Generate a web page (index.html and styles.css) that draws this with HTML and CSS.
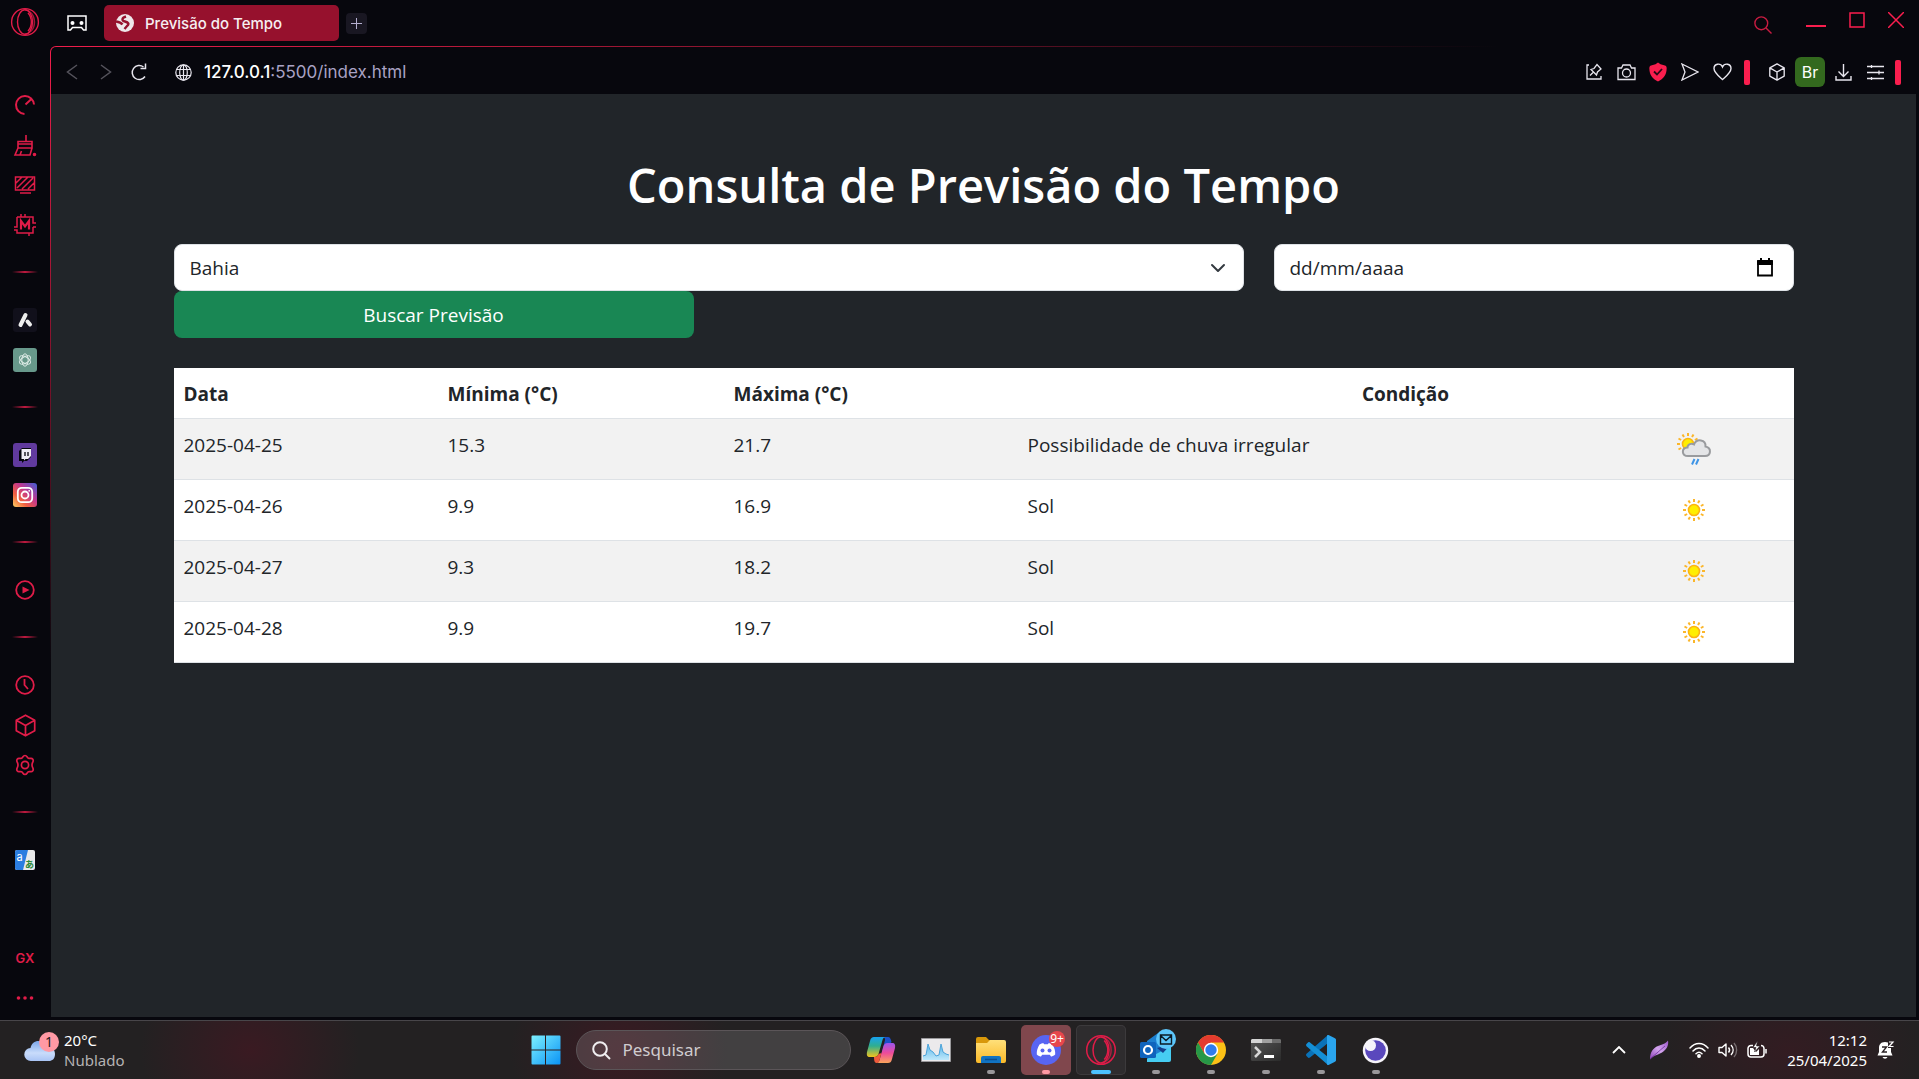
FILE: index.html
```html
<!DOCTYPE html>
<html lang="pt-BR">
<head>
<meta charset="utf-8">
<meta name="viewport" content="width=device-width, initial-scale=1">
<title>Previsão do Tempo</title>
<link rel="stylesheet" href="styles.css">
</head>
<body>
<svg class="defs" aria-hidden="true">
  <defs>
    <linearGradient id="gWin" x1="0" y1="0" x2="1" y2="1"><stop offset="0" stop-color="#7df0ff"/><stop offset="1" stop-color="#0a93f5"/></linearGradient>
    <linearGradient id="gInsta" x1="0" y1="1" x2="1" y2="0"><stop offset="0" stop-color="#fdd365"/><stop offset=".3" stop-color="#f2603f"/><stop offset=".6" stop-color="#c2378f"/><stop offset="1" stop-color="#3c5fd8"/></linearGradient>
    <linearGradient id="gCloud" x1="0" y1="0" x2="0" y2="1"><stop offset="0" stop-color="#7aa6ea"/><stop offset=".6" stop-color="#c9dcfb"/><stop offset="1" stop-color="#a9c4f5"/></linearGradient>
    <linearGradient id="gCopA" x1="0" y1="0" x2="0" y2="1"><stop offset="0" stop-color="#17a2f0"/><stop offset=".45" stop-color="#2fae8f"/><stop offset="1" stop-color="#f2c41c"/></linearGradient>
    <linearGradient id="gCopB" x1="0" y1="0" x2="0" y2="1"><stop offset="0" stop-color="#9a55ee"/><stop offset=".5" stop-color="#ee4b9a"/><stop offset="1" stop-color="#fba55a"/></linearGradient>
    <linearGradient id="gFolder" x1="0" y1="0" x2="0" y2="1"><stop offset="0" stop-color="#ffe07a"/><stop offset="1" stop-color="#fbb928"/></linearGradient>
    <linearGradient id="gTerm" x1="0" y1="0" x2="1" y2="1"><stop offset="0" stop-color="#565656"/><stop offset="1" stop-color="#2b2b2b"/></linearGradient>
    <linearGradient id="gFeather" x1="0" y1="1" x2="1" y2="0"><stop offset="0" stop-color="#8a3fb5"/><stop offset=".5" stop-color="#d3a5ee"/><stop offset="1" stop-color="#9a55c8"/></linearGradient>
    <linearGradient id="gGraph" x1="0" y1="0" x2="0" y2="1"><stop offset="0" stop-color="#5fb8ea"/><stop offset="1" stop-color="#bfe8fb"/></linearGradient>
    <symbol id="sun" viewBox="0 0 40 40">
      <g stroke="#fbb62a" stroke-width="2"><path d="M20 9v3M20 28v3M9 20h3M28 20h3M14.500 10.500l1.500 2.600M25.500 10.500L24 13.100M14.500 29.500l1.500-2.600M25.500 29.500L24 26.900M10.500 14.500l2.600 1.500M10.500 25.500l2.600-1.500M29.500 14.500L26.900 16M29.500 25.500L26.900 24"/></g>
      <circle cx="20" cy="20" r="5.500" fill="#ffee00" stroke="#fbb414" stroke-width="1.600"/>
    </symbol>
    <symbol id="opera" viewBox="0 0 30 30">
      <g fill="none" stroke="currentColor" stroke-width="1.400"><circle cx="15" cy="15" r="13.400"/><ellipse cx="15" cy="15" rx="7.500" ry="12.200"/><path d="M15 2.800c5 .5 9.500 5 9.500 12.200S20 26.700 15 27.200" opacity=".7"/><path d="M18 6c4.500 5 4.500 13 0 18"/></g>
    </symbol>
    <symbol id="cube" viewBox="0 0 20 20"><path d="M10 1l8 4.500v9L10 19l-8-4.500v-9zM2 5.500l8 4.500 8-4.500M10 10v9" fill="none" stroke="currentColor" stroke-width="1.500" stroke-linejoin="round"/></symbol>
  </defs>
</svg>

<div class="browser">
  <aside class="sidebar">
    <a class="side-logo" href="#" aria-label="Opera"><svg width="30" height="30"><use href="#opera"/></svg></a>
    <nav class="side-list" aria-label="Barra lateral">
      <a href="#" aria-label="GX Control"><svg width="22" height="22" viewBox="0 0 22 22" fill="none" stroke="currentColor" stroke-width="2"><path d="M10.500 20A9 9 0 1 1 20 10.500M11.500 10.500L18 4.500"/></svg></a>
      <a href="#" aria-label="GX Cleaner"><svg width="24" height="24" viewBox="0 0 24 24" fill="none" stroke="currentColor" stroke-width="1.600"><path d="M13 2v6M5 15V8.500h14V15zM5 11h14M5 15l-3 7h15l2-7M7 22l1.500-4"/><circle cx="21.500" cy="21.500" r="1" fill="currentColor"/></svg></a>
      <a href="#" aria-label="Vídeo"><svg width="22" height="20" viewBox="0 0 22 20" fill="none" stroke="currentColor" stroke-width="1.500"><path d="M1.500 2h19v13h-19zM6 18h11M2 8l6-6M3 13L14 2M8 14L19 3M14 14l6-6"/></svg></a>
      <a href="#" aria-label="Mods"><svg width="24" height="24" viewBox="0 0 24 24" fill="none" stroke="currentColor" stroke-width="1.500"><path d="M4 4h16v6h3M4 4v10H1M20 14v6H4v-3H1M20 14h3M8 4V1M12 4V1M16 20v3"/><path d="M8 16.500V8l4 5.500L16 8v8.500" stroke-width="2.200"/></svg></a>
      <hr>
      <a href="#" aria-label="Aria"><svg width="24" height="24" viewBox="0 0 24 24"><rect width="24" height="24" rx="3" fill="#11101b"/><path d="M7.500 17l5-10" stroke="#eee" stroke-width="4" stroke-linecap="round"/><path d="M14.500 13.500l2.500 3" stroke="#eee" stroke-width="4" stroke-linecap="round"/></svg></a>
      <a href="#" aria-label="ChatGPT"><svg width="24" height="24" viewBox="0 0 24 24"><rect width="24" height="24" rx="3" fill="#68998b"/><g fill="none" stroke="#dcebe6" stroke-width="1"><ellipse cx="12" cy="12" rx="3.200" ry="6.200"/><ellipse cx="12" cy="12" rx="3.200" ry="6.200" transform="rotate(60 12 12)"/><ellipse cx="12" cy="12" rx="3.200" ry="6.200" transform="rotate(120 12 12)"/></g></svg></a>
      <hr>
      <a href="#" aria-label="Twitch"><svg width="24" height="24" viewBox="0 0 24 24"><rect width="24" height="24" rx="3" fill="#613a9e"/><path d="M6 8l3-3h9v9l-4 4h-3l-2 2v-2H6z" fill="#07070d"/><path d="M8.500 6H18v7l-3 3h-2.500L11 17.500V16H8.500z" fill="#f0eef4"/><path d="M12 9v4M15 9v4" stroke="#07070d" stroke-width="1.300"/></svg></a>
      <a href="#" aria-label="Instagram"><svg width="24" height="24" viewBox="0 0 24 24"><rect width="24" height="24" rx="3" fill="url(#gInsta)"/><g fill="none" stroke="#fff" stroke-width="1.800"><rect x="4.800" y="4.800" width="14.400" height="14.400" rx="4"/><circle cx="12" cy="12" r="3.500"/></g><circle cx="16.200" cy="7.800" r=".9" fill="#fff"/></svg></a>
      <hr>
      <a href="#" aria-label="Player"><svg width="20" height="20" viewBox="0 0 20 20"><circle cx="10" cy="10" r="8.800" fill="none" stroke="currentColor" stroke-width="1.800"/><path d="M7.500 6.500v7l7-3.500z" fill="currentColor"/></svg></a>
      <hr>
      <a href="#" aria-label="Histórico"><svg width="20" height="20" viewBox="0 0 20 20" fill="none" stroke="currentColor" stroke-width="1.800"><circle cx="10" cy="10" r="8.800"/><path d="M9.500 4v6l3.500 4"/></svg></a>
      <a href="#" aria-label="Extensões"><svg width="23" height="23"><use href="#cube"/></svg></a>
      <a href="#" aria-label="Configurações"><svg width="22" height="22" viewBox="0 0 22 22" fill="none" stroke="currentColor" stroke-width="1.700"><path d="M11 1.500c2.200 0 2 2.200 3.500 2.800 1.700.7 3-.9 4.300.9 1.500 2.400-.8 2.800-.8 5.800s2.300 3.400.8 5.800c-1.300 1.800-2.600.2-4.300.9-1.500.6-1.300 2.800-3.500 2.800s-2-2.200-3.500-2.800c-1.700-.7-3 .9-4.300-.9C1.700 14.400 4 14 4 11S1.700 7.600 3.200 5.200c1.300-1.800 2.600-.2 4.300-.9C9 3.700 8.800 1.500 11 1.500z"/><circle cx="11" cy="11" r="3.600"/></svg></a>
      <hr>
      <a href="#" aria-label="Tradutor"><svg width="20" height="20" viewBox="0 0 20 20"><rect width="20" height="20" rx="2" fill="#e9e9ea"/><path d="M2 0h11L8 20H2a2 2 0 0 1-2-2V2a2 2 0 0 1 2-2z" fill="#2b7de0"/><text x="1.500" y="10.500" font-size="11" fill="#fff" font-family="Inter, sans-serif">a</text><text x="10" y="17.500" font-size="9" font-weight="700" fill="#2d8a3a" font-family="Noto Sans CJK JP, sans-serif">あ</text></svg></a>
    </nav>
    <div class="side-foot">
      <a href="#">GX</a>
      <a href="#" aria-label="Mais"><svg width="18" height="4" viewBox="0 0 18 4" fill="currentColor"><circle cx="2.500" cy="2" r="1.800"/><circle cx="9" cy="2" r="1.800"/><circle cx="15.500" cy="2" r="1.800"/></svg></a>
    </div>
  </aside>

  <div class="main">
    <header class="tabbar">
      <button class="corner" aria-label="GX Corner"><svg width="20" height="16" viewBox="0 0 20 16"><path d="M1 1h18v14h-2.500l-2-2.500h-9L3.500 15H1z" fill="none" stroke="currentColor" stroke-width="1.500"/><circle cx="5.500" cy="8" r="2" fill="currentColor"/><circle cx="14.500" cy="8" r="2" fill="currentColor"/></svg></button>
      <button class="tab"><svg width="18" height="18" viewBox="0 0 18 18"><circle cx="9" cy="9" r="9" fill="#eee7ea"/><path d="M10 2.500C5.500 4 5.500 6.500 9 7.500c3.500 1 4.500 2.500 2 4.500l-2.500 3M0 7.500c3 .5 5 1 6.500 3" fill="none" stroke="#96112d" stroke-width="2.400"/></svg><span>Previsão do Tempo</span></button>
      <button class="newtab" aria-label="Nova aba"><svg width="11" height="11" viewBox="0 0 11 11" stroke="currentColor"><path d="M5.500 0v11M0 5.500h11"/></svg></button>
      <div class="window-buttons">
        <button class="find" aria-label="Pesquisar abas"><svg width="18" height="18" viewBox="0 0 18 18" fill="none" stroke="currentColor" stroke-width="1.400"><circle cx="7.300" cy="7.300" r="6.400"/><path d="M12 12l5.500 5.500"/></svg></button>
        <button aria-label="Minimizar"><svg width="20" height="16" viewBox="0 0 20 16" stroke="currentColor" stroke-width="2"><path d="M0 14h20"/></svg></button>
        <button aria-label="Maximizar"><svg width="16" height="16" viewBox="0 0 16 16" fill="none" stroke="currentColor" stroke-width="1.500"><path d="M1 1h14v14H1z"/></svg></button>
        <button aria-label="Fechar"><svg width="16" height="16" viewBox="0 0 16 16" stroke="currentColor" stroke-width="1.500"><path d="M0 0l16 16M16 0L0 16"/></svg></button>
      </div>
    </header>

    <div class="frame">
      <div class="toolbar">
        <button class="nav dim" aria-label="Voltar"><svg width="12" height="16" viewBox="0 0 12 16" fill="none" stroke="currentColor" stroke-width="1.500"><path d="M11 1L1.500 8 11 15"/></svg></button>
        <button class="nav dim" aria-label="Avançar"><svg width="12" height="16" viewBox="0 0 12 16" fill="none" stroke="currentColor" stroke-width="1.500"><path d="M1 1l9.500 7L1 15"/></svg></button>
        <button class="nav reload" aria-label="Recarregar"><svg width="16" height="18" viewBox="0 0 16 18" fill="none" stroke="currentColor" stroke-width="1.500"><path d="M14 13.500A7 7 0 1 1 12.500 4M9.500 5.500h5V.5"/></svg></button>
        <button class="site" aria-label="Informações do site"><svg width="17" height="17" viewBox="0 0 17 17" fill="none" stroke="currentColor" stroke-width="1.200"><circle cx="8.500" cy="8.500" r="7.700"/><ellipse cx="8.500" cy="8.500" rx="3.800" ry="7.700"/><path d="M1.500 5.500h14M1.500 11.500h14M8.500 1v15"/></svg></button>
        <a class="url" href="#"><b>127.0.0.1</b>:5500/index.html</a>
        <div class="tools">
          <button aria-label="Fixar"><svg width="18" height="18" viewBox="0 0 18 18" fill="none" stroke="currentColor" stroke-width="1.300"><path d="M4 2H2v14h14v-3M5 12.500l3-3M6 6.500l5.500 5.500 1-3L16 6l-4-4.500L9 5.500z"/></svg></button>
          <button aria-label="Captura"><svg width="19" height="17" viewBox="0 0 19 17" fill="none" stroke="currentColor" stroke-width="1.300"><path d="M1 15.500V4h3.500L6 1h7l1.500 3H18v11.500z"/><circle cx="9.500" cy="9" r="4"/></svg></button>
          <button aria-label="Bloqueador"><svg width="18" height="20" viewBox="0 0 18 20"><path d="M9 .5l2.500 1.700L16 3.500c1.500.5 2 1.500 1.500 5-.5 5-3.500 8.500-8.500 11-5-2.500-8-6-8.500-11C0 5 .5 4 2 3.500l4.500-1.300z" fill="#fa1e4e"/><path d="M5 9.500l3 3 5-5.500" fill="none" stroke="#2c0a16" stroke-width="1.800"/></svg></button>
          <button aria-label="Enviar"><svg width="18" height="18" viewBox="0 0 18 18" fill="none" stroke="currentColor" stroke-width="1.300"><path d="M1 1l16 8L1 17l3-8z"/></svg></button>
          <button aria-label="Favoritar"><svg width="19" height="18" viewBox="0 0 19 18" fill="none" stroke="currentColor" stroke-width="1.400"><path d="M9.500 16.500C5 12.500 1 9.500 1 5.500c0-5 6.500-6 8.500-1.500 2-4.500 8.500-3.500 8.500 1.500 0 4-4 7-8.500 11z"/></svg></button>
          <span class="bar"></span>
          <button aria-label="Extensões"><svg width="18" height="18"><use href="#cube"/></svg></button>
          <button class="br">Br</button>
          <button aria-label="Downloads"><svg width="17" height="17" viewBox="0 0 17 17" fill="none" stroke="currentColor" stroke-width="1.400"><path d="M8.500 0v12M3.500 7.500l5 5 5-5M1 12v4h15v-4"/></svg></button>
          <button aria-label="Configuração fácil"><svg width="17" height="17" viewBox="0 0 17 17" fill="none" stroke="currentColor" stroke-width="1.300"><path d="M0 2.500h17M0 8.500h17M0 14.500h17M4.500 1v3M12 6.500v4M4.500 13v3"/></svg></button>
          <span class="bar last"></span>
        </div>
      </div>

      <main class="page">
        <div class="container">
          <h1>Consulta de Previsão do Tempo</h1>
          <form class="search-form">
            <div class="select-wrap">
              <select aria-label="Estado"><option>Bahia</option></select>
              <svg class="caret" width="20" height="20" viewBox="0 0 16 16" fill="none" stroke="#343a40" stroke-width="2" stroke-linecap="round" stroke-linejoin="round"><path d="M2 5l6 6 6-6"/></svg>
            </div>
            <div class="date-box">
              <input type="text" placeholder="dd/mm/aaaa" aria-label="Data">
              <button type="button" aria-label="Abrir calendário"><svg width="18" height="20" viewBox="0 0 18 20"><path d="M2 3h14v14.500H2z" fill="none" stroke="#000" stroke-width="1.800"/><path d="M1 3h16v4H1zM4 0h2v4H4zM12 0h2v4h-2z"/></svg></button>
            </div>
            <button class="submit" type="button">Buscar Previsão</button>
          </form>
          <table>
            <colgroup><col class="c-date"><col class="c-min"><col class="c-max"><col class="c-cond"><col></colgroup>
            <thead><tr><th>Data</th><th>Mínima (°C)</th><th>Máxima (°C)</th><th colspan="2" class="center">Condição</th></tr></thead>
            <tbody>
              <tr><td>2025-04-25</td><td>15.3</td><td>21.7</td><td>Possibilidade de chuva irregular</td><td class="center"><svg width="40" height="40" viewBox="0 0 40 40"><g stroke="#fbb62a" stroke-width="2"><path d="M14 4v3M3 15h3M8.500 5.500l1.500 2.600M19.500 5.500L18 8.100M4.500 9.500l2.600 1.500M4.500 20.500L7.100 19M23.500 9.500L20.900 11"/></g><circle cx="14" cy="15" r="5.500" fill="#ffee00" stroke="#fbb414" stroke-width="1.600"/><path d="M14 27c-6.500 0-7-8-.5-8.500 0-3.500 4-4.500 6.500-3 2.500-6.500 12-5 11.500 2 6.500 1.500 5.500 9.500-.5 9.500z" fill="#e4e5e7" stroke="#999b9e" stroke-width="2"/><path d="M20.500 30l-2.500 5.500M24.500 30L22 35.500" stroke="#3f95e6" stroke-width="2"/></svg></td></tr>
              <tr><td>2025-04-26</td><td>9.9</td><td>16.9</td><td>Sol</td><td class="center"><svg width="40" height="40"><use href="#sun"/></svg></td></tr>
              <tr><td>2025-04-27</td><td>9.3</td><td>18.2</td><td>Sol</td><td class="center"><svg width="40" height="40"><use href="#sun"/></svg></td></tr>
              <tr><td>2025-04-28</td><td>9.9</td><td>19.7</td><td>Sol</td><td class="center"><svg width="40" height="40"><use href="#sun"/></svg></td></tr>
            </tbody>
          </table>
        </div>
      </main>
    </div>
  </div>
</div>

<footer class="taskbar">
  <button class="weather">
    <svg width="36" height="36" viewBox="0 0 36 36"><path d="M8 32a6.500 6.500 0 0 1-.5-13C9 11 19 9 22 17c3-1 10 1 10 8 0 5-3 7-6 7z" fill="url(#gCloud)"/><circle cx="26" cy="13" r="10" fill="#ff99a4"/><text x="26" y="18" text-anchor="middle" font-size="14" fill="#2a1a1c" font-family="Noto Sans, sans-serif">1</text></svg>
    <span class="weather-text"><span>20°C</span><span class="muted">Nublado</span></span>
  </button>

  <div class="apps">
    <button class="app" aria-label="Iniciar"><svg width="30" height="30" viewBox="0 0 30 30"><path d="M1.500.5H14v14H.5v-13a1 1 0 0 1 1-1zM15 .5h13.500a1 1 0 0 1 1 1v13H15zM.5 15.500H14v14H1.500a1 1 0 0 1-1-1zM15 15.500h14.500v13a1 1 0 0 1-1 1H15z" fill="url(#gWin)"/></svg></button>
    <label class="search"><svg width="19" height="19" viewBox="0 0 19 19" fill="none" stroke="#f0eef0" stroke-width="2"><circle cx="8" cy="8" r="6.800"/><path d="M12.500 12.500l5.500 5.500"/></svg><input type="text" placeholder="Pesquisar" aria-label="Pesquisar"></label>
    <button class="app" aria-label="Copilot"><svg width="30" height="28" viewBox="0 0 30 28"><path d="M15 20l4-16c.5-2-1-3-3-3h6c2 0 3 2 3.500 5z" fill="#1c50c8"/><path d="M8 1h12c-2 0-3 1-3.500 3l-4 14c-.7 2-2 3-4 3H4c-3 0-3.500-2-3-5L4 5c.7-3 2-4 4-4z" fill="url(#gCopA)"/><path d="M22 27H10c2 0 3-1 3.500-3l4-14c.7-2 2-3 4-3H26c3 0 3.500 2 3 5l-3 11c-.7 3-2 4-4 4z" fill="url(#gCopB)"/><path d="M8 21c3 0 4-1 4.500-3l3-1-2 7c-.5 2-1 3-3 3-2 0-2.500-3-2.500-6z" fill="#ef5a3c"/></svg></button>
    <button class="app" aria-label="Monitor"><svg width="30" height="24" viewBox="0 0 30 24"><path d="M.5.500h29v23H.5z" fill="#eceaec" stroke="#9a999c"/><path d="M2 18l3-1 2-10 2 5 3 2 3 4 3-1 2-10 2 7 3 2 3 1v5H2z" fill="url(#gGraph)"/><path d="M2 18l3-1 2-11 2 6 3 2 3 4 3-1 2-11 2 8 3 2 3 1" fill="none" stroke="#4aa3da"/></svg></button>
    <button class="app run" aria-label="Explorador"><svg width="30" height="28" viewBox="0 0 30 28"><path d="M0 3a2 2 0 0 1 2-2h8l3 3h10v5H0z" fill="#d9980a"/><path d="M0 7h11l3-3h14a2 2 0 0 1 2 2v19a2 2 0 0 1-2 2H2a2 2 0 0 1-2-2z" fill="url(#gFolder)"/><path d="M5 27v-5a2 2 0 0 1 2-2h16a2 2 0 0 1 2 2v5z" fill="#1173c2"/><path d="M9 23.500h12" stroke="#0a4f90" stroke-width="1.500"/></svg></button>
    <button class="app run alert" aria-label="Discord"><svg width="38" height="36" viewBox="0 0 38 36"><circle cx="19" cy="21" r="15" fill="#5865f2"/><path d="M12.500 15.500c2-1.200 3.500-1.500 4-1.200l.7 1h3.600l.7-1c.5-.3 2 0 4 1.200 2 3 3 7 2.700 10-1.500 1.500-3.500 2-4.200 2l-1.200-1.800h-7.600L14 27.500c-.7 0-2.700-.5-4.200-2-.3-3 .7-7 2.700-10z" fill="#fff"/><circle cx="15.500" cy="21.500" r="2" fill="#5865f2"/><circle cx="22.500" cy="21.500" r="2" fill="#5865f2"/><circle cx="30" cy="10" r="8" fill="#e8464c"/><text x="30" y="14" text-anchor="middle" font-size="12" fill="#fff" font-family="Noto Sans, sans-serif">9+</text></svg></button>
    <button class="app run active" aria-label="Opera GX"><svg width="32" height="32"><use href="#opera"/></svg></button>
    <button class="app run mail" aria-label="Outlook"><svg width="38" height="36" viewBox="0 0 38 36"><path d="M8 12L19 4l12 9v16a4 4 0 0 1-4 4H12a4 4 0 0 1-4-4z" fill="#1c7fd0"/><path d="M8 33h22a2 2 0 0 0 2-2V17L8 30z" fill="#46cdf2"/><path d="M18 19l14-4-8 9z" fill="#143f8c"/><rect x="1" y="13" width="16" height="16" rx="1.500" fill="#0f64bd"/><circle cx="9" cy="21" r="4" fill="none" stroke="#fff" stroke-width="2.200"/><circle cx="27" cy="10" r="10" fill="#5cc6fb"/><path d="M21.500 6h11v9h-11zM21.500 6.500l5.500 5 5.500-5" fill="none" stroke="#0b1a26" stroke-width="1.400"/></svg></button>
    <button class="app run" aria-label="Chrome"><svg width="30" height="30" viewBox="0 0 30 30"><circle cx="15" cy="15" r="15" fill="#fbc116"/><path d="M2 7.500A15 15 0 0 1 28 7.500H15L8.500 18.700z" fill="#e33b2e"/><path d="M2 7.500A15 15 0 0 0 15 30l6.500-11.200h-13z" fill="#279847"/><circle cx="15" cy="15" r="7.200" fill="#fff"/><circle cx="15" cy="15" r="5.700" fill="#2f7cec"/></svg></button>
    <button class="app run" aria-label="Terminal"><svg width="30" height="22" viewBox="0 0 30 22"><rect width="30" height="22" rx="1.500" fill="url(#gTerm)"/><path d="M1 0h10v4H0V1z" fill="#d4d4d4"/><path d="M11 0h10v4H11z" fill="#a0a0a0"/><path d="M21 0h8l1 1v3h-9z" fill="#6c6c6c"/><path d="M4 8l5 5-5 5" fill="none" stroke="#d6d6d6" stroke-width="2.500"/><path d="M13 17.500h10" stroke="#fff" stroke-width="3"/></svg></button>
    <button class="app run" aria-label="VS Code"><svg width="30" height="30" viewBox="0 0 30 30"><path d="M22 0v8L4 22.500c-1 .7-1.700.5-2.300-.2L.5 21c-.6-.7-.6-1.500 0-2.200z" fill="#0a72b8"/><path d="M22 30v-8L4 7.500c-1-.7-1.700-.5-2.300.2L.5 9c-.6.700-.6 1.500 0 2.200z" fill="#148fd6"/><path d="M21 29.500V.5c.3-.5 1-.6 1.500-.4l6 2.800c1 .5 1.500 1 1.500 2v20.200c0 1-.5 1.500-1.500 2l-6 2.800c-.5.2-1.200 0-1.500-.4z" fill="#2aa5ee"/></svg></button>
    <button class="app run" aria-label="Insomnia"><svg width="27" height="27" viewBox="0 0 27 27"><circle cx="13.500" cy="13.500" r="12.700" fill="#f6f4fa"/><circle cx="13.500" cy="13.500" r="10.300" fill="#5a48bd"/><circle cx="8.500" cy="8.500" r="5.500" fill="#f6f4fa"/></svg></button>
  </div>

  <div class="tray">
    <button class="t-chev" aria-label="Ícones ocultos"><svg width="14" height="8" viewBox="0 0 14 8" fill="none" stroke="currentColor" stroke-width="1.800"><path d="M1 7l6-6 6 6"/></svg></button>
    <button class="t-feather" aria-label="Caneta"><svg width="20" height="20" viewBox="0 0 20 20"><path d="M1 19.500C1 12 4 8 9 6c4-1.500 7-2 10-5.500C20 6 17 10 13 12.500 9 15 5 15 1 19.500z" fill="url(#gFeather)"/><path d="M1 19L16 6" stroke="#6f2f9c" stroke-width=".8"/></svg></button>
    <button class="t-net" aria-label="Rede, volume e bateria">
      <svg width="20" height="16" viewBox="0 0 20 16" fill="none" stroke="currentColor" stroke-width="1.500" stroke-linecap="round"><path d="M1 6c5-6 13-6 18 0M4 9c3.500-4 8.500-4 12 0M7 11.800c2-2 4-2 6 0"/><circle cx="10" cy="14" r="1.200" fill="currentColor"/></svg>
      <svg width="20" height="16" viewBox="0 0 20 16" fill="none" stroke="currentColor" stroke-width="1.400" stroke-linejoin="round"><path d="M1 5.500h3L8 2v12l-4-3.500H1zM10.500 5.500c1.300 1.500 1.300 3.500 0 5M13 3c2.800 3 2.800 7 0 10"/><path d="M16 1c3.500 4 3.500 10 0 14" opacity=".35"/></svg>
      <svg width="20" height="18" viewBox="0 0 20 18" fill="none" stroke="currentColor" stroke-width="1.500"><path d="M6 4.500H4a3 3 0 0 0-3 3V13a3 3 0 0 0 3 3h10a3 3 0 0 0 3-3V7.500a3 3 0 0 0-3-3M19 8v4.500"/><path d="M3 7h3l3 4 3-3v6H3z" fill="currentColor" stroke="none"/><path d="M10.500 0L6 6.500h3L7.500 11 13 5h-3.500z" fill="currentColor" stroke="#2a2225" stroke-width=".6"/></svg>
    </button>
    <button class="clock"><span>12:12</span><span>25/04/2025</span></button>
    <button class="t-bell" aria-label="Notificações"><svg width="18" height="20" viewBox="0 0 18 20"><path d="M8 2C3.500 2 2 5 2 8v4L.5 15.500h15L14 12V3zM5.500 17a2.700 2.700 0 0 0 5 0z" fill="#fff"/><path d="M11 1h6v7h-6z" fill="#2a2225"/><path d="M12 2h4l-4 4.500h4.500" fill="none" stroke="#fff" stroke-width="1.200"/><path d="M5 7h4.500L5.500 12H10" fill="none" stroke="#2a2225" stroke-width="1.400"/></svg></button>
  </div>
</footer>
</body>
</html>
```
FILE: styles.css
```css
* { box-sizing: border-box; }

body {
  margin: 0;
  min-height: 100vh;
  display: flex;
  flex-direction: column;
  background: #07070d;
  color: #fff;
  font-family: Inter, sans-serif;
}

button {
  padding: 0;
  border: 0;
  background: none;
  color: inherit;
  font: inherit;
  display: flex;
  align-items: center;
  justify-content: center;
}

a { color: inherit; text-decoration: none; }
svg { display: block; flex: none; }
.defs { position: absolute; width: 0; height: 0; }

/* Browser window */
.browser { flex: 1; display: flex; }

.sidebar {
  width: 50px;
  flex: none;
  display: flex;
  flex-direction: column;
  color: #e01c48;
}
.side-logo { height: 85px; padding: 7px 0 0 10px; }
.side-list { display: flex; flex-direction: column; }
.side-list a, .side-foot a {
  height: 40px;
  display: flex;
  align-items: center;
  justify-content: center;
}
.side-list hr {
  width: 26px;
  height: 2px;
  margin: 26px auto 27px;
  border: 0;
  background: linear-gradient(90deg, transparent, #c01a40, transparent);
}
.side-foot { margin: auto 0 2px; font-size: 13px; font-weight: 600; }

.main { flex: 1; min-width: 0; display: flex; flex-direction: column; }

.tabbar { height: 46px; display: flex; align-items: flex-start; }
.corner { width: 20px; height: 46px; margin-left: 17px; }
.tab {
  width: 235px;
  height: 36px;
  margin: 5px 7px 0 17px;
  padding-left: 12px;
  gap: 11px;
  justify-content: flex-start;
  border-radius: 5px;
  background: #96112d;
  color: #f6eef1;
  font-size: 15px;
  font-weight: 500;
}
.newtab {
  width: 21px;
  height: 21px;
  margin-top: 13px;
  border-radius: 4px;
  background: #191722;
  color: #b5afd0;
}
.window-buttons {
  margin: 12px 15px 0 auto;
  display: flex;
  align-items: flex-start;
  gap: 23px;
  color: #fa1e4e;
}
.find { margin: 4px 11px 0 0; color: #c81b41; }

.frame {
  flex: 1;
  display: flex;
  flex-direction: column;
  padding: 1px 3px 3px 1px;
  border-radius: 6px 0 0 0;
  background: radial-gradient(1450px 620px at 0 0, #f01d4b, #b31839 30%, #07070d);
  box-shadow: inset -3px -3px 0 #07070d;
}

.toolbar {
  height: 47px;
  display: flex;
  align-items: center;
  margin-right: -3px;
  padding: 3px 18px 0 4px;
  border-radius: 5px 0 0 0;
  background: #07070d;
  color: #e8e6ee;
}
.nav { width: 34px; height: 30px; }
.reload { width: 32px; }
.dim { color: #55535c; }
.site { width: 17px; margin: 0 12px 0 20px; }
.url { font-size: 17px; color: #a9a2c4; }
.url b { font-weight: 500; color: #fff; }
.tools { margin-left: auto; display: flex; align-items: center; }
.tools button { width: 32px; height: 30px; }
.bar { width: 6px; height: 25px; margin: 0 11px 0 6px; border-radius: 2px; background: #fa1e4e; }
.bar.last { margin: 0 0 0 4px; }
.tools .br { width: 30px; margin: 0 2px; border-radius: 6px; background: #33691e; font-size: 16px; color: #fff; }

/* Forecast page */
.page {
  flex: 1;
  padding: 61px 0 60px;
  background: #212529;
  font-family: "Open Sans", sans-serif;
  font-size: 19px;
  line-height: 30px;
}
.container { max-width: 1650px; margin: 0 auto; padding: 0 15px; }
h1 {
  margin: 0 0 29px;
  font-size: 47px;
  line-height: 60px;
  font-weight: 600;
  text-align: center;
}

.search-form {
  display: grid;
  grid-template-columns: repeat(3, 1fr);
  column-gap: 30px;
  margin-bottom: 30px;
}
.search-form > * { height: 47px; }
.select-wrap { grid-column: span 2; display: grid; align-items: center; }
.select-wrap > * { grid-area: 1 / 1; }
.caret { width: 16px; justify-self: end; margin-right: 18px; pointer-events: none; }
select, .date-box {
  width: 100%;
  height: 47px;
  border: 1px solid #dee2e6;
  border-radius: 8px;
  background: #fff;
  color: #212529;
  font: inherit;
}
select { appearance: none; padding: 0 15px; }
.date-box { display: flex; align-items: center; padding: 0 19px 0 15px; }
input {
  flex: 1;
  min-width: 0;
  padding: 0;
  border: 0;
  outline: 0;
  background: none;
  color: inherit;
  font: inherit;
}
input::placeholder { color: inherit; opacity: 1; }
.submit { border-radius: 8px; background: #198754; color: #fff; }

table {
  width: 100%;
  table-layout: fixed;
  border-collapse: collapse;
  background: #fff;
  color: #212529;
}
.c-date { width: 264px; }
.c-min { width: 286px; }
.c-max { width: 294px; }
.c-cond { width: 577px; }
th, td {
  padding: 11px 10px 9px;
  border-bottom: 1px solid #dee2e6;
  text-align: left;
  vertical-align: top;
}
th { font-weight: 700; }
.center { text-align: center; }
td.center { padding: 10px; }
.center svg { margin: 0 auto; }
tbody tr:nth-child(odd) { background: #f2f2f2; }

/* Taskbar */
.taskbar {
  height: 59px;
  display: grid;
  grid-template-columns: 1fr auto 1fr;
  align-items: center;
  border-top: 1px solid #48464a;
  background:
    radial-gradient(110px 90px at 250px 50%, #3a1a22, transparent),
    radial-gradient(110px 90px at 620px 50%, #3a1a22, transparent),
    radial-gradient(130px 90px at 1790px 50%, #331c22, transparent),
    #232122;
  font-family: "Noto Sans", sans-serif;
  font-size: 15px;
  line-height: 20px;
}
.weather { justify-self: start; margin-left: 23px; gap: 5px; }
.weather svg { margin-top: -6px; }
.weather-text, .clock { display: flex; flex-direction: column; text-align: left; align-items: flex-start; }
.muted { color: #b5b3b4; }
.apps { display: flex; align-items: center; gap: 5px; padding-left: 2px; }
.app { width: 50px; height: 50px; border-radius: 5px; position: relative; }
.run::after {
  content: "";
  position: absolute;
  bottom: 1px;
  width: 8px;
  height: 4px;
  border-radius: 2px;
  background: #99979a;
}
.alert { background: #80474d; }
.alert svg, .mail svg { margin-top: -6px; }
.mail svg { margin-left: 4px; }
.alert::after { background: #ff99a4; }
.active { background: #2e2c2e; box-shadow: inset 0 0 0 1px #3c3a3c; color: #e01c48; }
.active::after { width: 20px; background: #4cc2ff; }
.search {
  width: 275px;
  height: 40px;
  display: flex;
  align-items: center;
  gap: 12px;
  padding: 0 15px;
  border: 1px solid #5b5558;
  border-radius: 20px;
  background: rgba(255, 255, 255, .14);
  color: #d0cccf;
  font-size: 17px;
}
.tray { display: flex; align-items: center; justify-self: end; padding-right: 24px; }
.t-feather { margin: 0 20px 0 23px; }
.t-net { gap: 9px; }
.clock { align-items: flex-end; margin: 0 10px 0 20px; }
```
